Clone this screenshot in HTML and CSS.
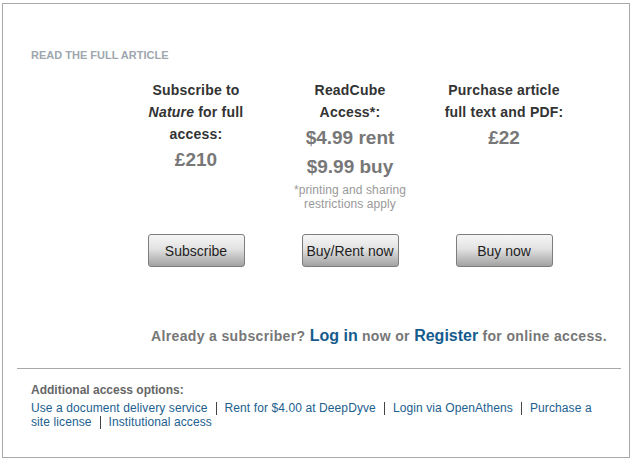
FILE: index.html
```html
<!DOCTYPE html>
<html>
<head>
<meta charset="utf-8">
<link rel="stylesheet" href="styles.css">
</head>
<body>
<div class="panel">
  <div class="main">
    <h2 class="kicker">READ THE FULL ARTICLE</h2>
    <div class="options">
      <div class="opt">
        <div class="opt-title">Subscribe to <em>Nature</em> for full access:</div>
        <div class="price">£210</div>
      </div>
      <div class="opt">
        <div class="opt-title">ReadCube<br>Access*:</div>
        <div class="price">$4.99 rent</div>
        <div class="price">$9.99 buy</div>
        <div class="note">*printing and sharing restrictions apply</div>
      </div>
      <div class="opt">
        <div class="opt-title">Purchase article full text and PDF:</div>
        <div class="price">£22</div>
      </div>
      <button class="btn">Subscribe</button>
      <button class="btn">Buy/Rent now</button>
      <button class="btn">Buy now</button>
    </div>
    <p class="login">Already a subscriber? <a class="big-link" href="#">Log in</a> now or <a class="big-link" href="#">Register</a> for online access.</p>
  </div>
  <div class="more">
    <div class="more-label">Additional access options:</div>
    <div class="more-links"><a href="#">Use a document delivery service</a><span class="sep"></span><a href="#">Rent for $4.00 at DeepDyve</a><span class="sep"></span><a href="#">Login via OpenAthens</a><span class="sep"></span><a href="#">Purchase a site license</a><span class="sep"></span><a href="#">Institutional access</a></div>
  </div>
</div>
</body>
</html>
```

FILE: styles.css
```css
html, body {
  margin: 0;
  padding: 0;
  background: #fff;
}

body {
  font-family: "Liberation Sans", Arial, sans-serif;
}

.panel {
  box-sizing: border-box;
  width: 628px;
  height: 455px;
  margin: 3px 0 0 2px;
  border: 1px solid #a9a9a9;
}

.main {
  padding: 44px 22px 22px 28px;
}

.kicker {
  margin: 0;
  font-size: 11px;
  line-height: 14px;
  font-weight: bold;
  color: #9ea6ae;
}

.options {
  display: grid;
  grid-template-columns: repeat(3, 154px);
  row-gap: 23px;
  margin: 17px 0 0 88px;
}

.opt {
  text-align: center;
}

.opt-title {
  font-size: 14px;
  line-height: 22px;
  font-weight: bold;
  color: #333;
  letter-spacing: 0.2px;
  padding: 0 14px;
}

.opt-title em {
  font-style: italic;
}

.price {
  font-size: 19px;
  line-height: 29px;
  font-weight: bold;
  color: #777;
}

.note {
  margin-top: 2px;
  font-size: 12px;
  line-height: 14px;
  color: #999;
  padding: 0 20px;
  letter-spacing: 0.1px;
}

.btn {
  justify-self: center;
  box-sizing: border-box;
  width: 97px;
  height: 33px;
  padding: 0;
  border: 1px solid #7d7d7d;
  border-radius: 3px;
  background: linear-gradient(#f6f6f6 0%, #e2e2e2 45%, #c4c4c4 70%, #a2a2a2 100%);
  font-family: "Liberation Sans", Arial, sans-serif;
  font-size: 14px;
  color: #1e1e1e;
}

.login {
  margin: 59px 0 0;
  text-align: right;
  font-size: 14px;
  line-height: 20px;
  font-weight: bold;
  color: #777;
  letter-spacing: 0.35px;
}

.big-link {
  font-size: 16px;
  color: #155c8e;
  text-decoration: none;
  letter-spacing: 0;
}

.more {
  margin: 0 8px 0 14px;
  border-top: 1px solid #a9a9a9;
  padding: 14px 20px 0 14px;
}

.more-label {
  font-size: 12px;
  line-height: 14px;
  font-weight: bold;
  color: #666;
}

.more-links {
  margin-top: 4px;
  font-size: 12px;
  line-height: 14px;
  color: #22608f;
  letter-spacing: 0.1px;
}

.more-links a {
  color: #22608f;
  text-decoration: none;
}

.sep {
  display: inline-block;
  width: 0;
  height: 13px;
  margin: 0 8px;
  border-left: 1px solid #444;
  vertical-align: -3px;
}
```
